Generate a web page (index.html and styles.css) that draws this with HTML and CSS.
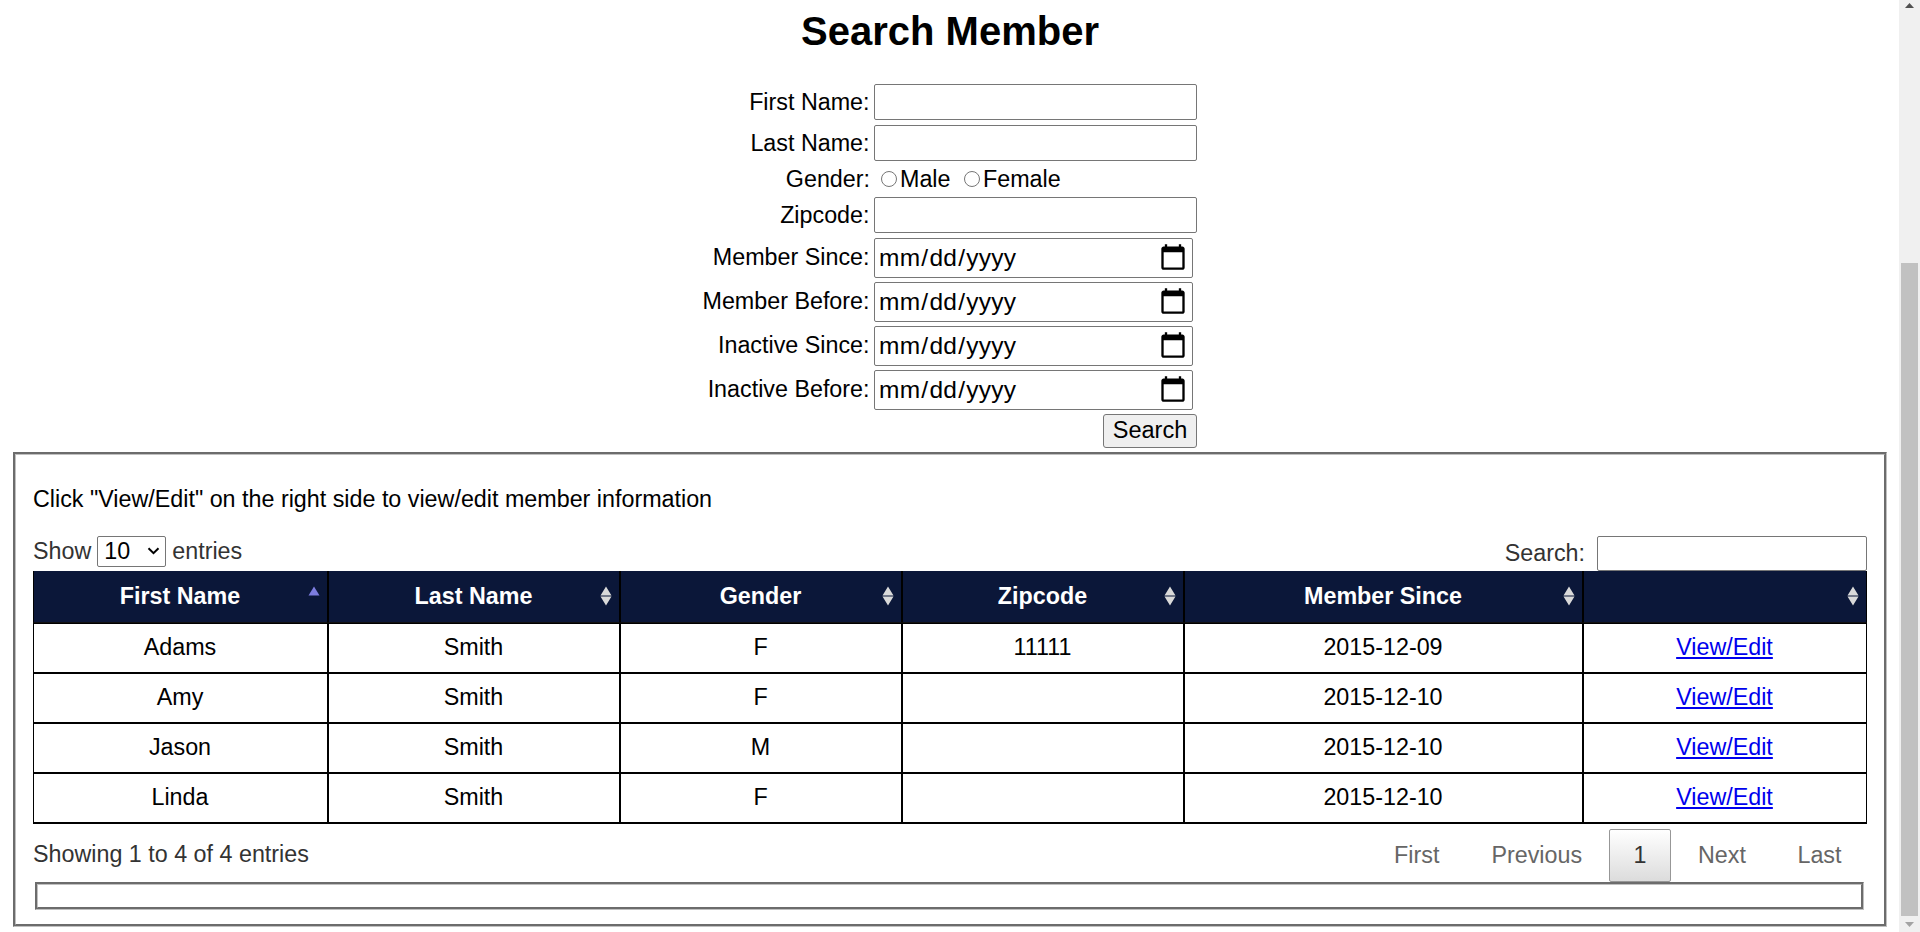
FILE: index.html
```html
<!DOCTYPE html>
<html lang="en">
<head>
<meta charset="utf-8">
<title>Search Member</title>
<link rel="stylesheet" href="styles.css">
</head>
<body>
<div class="layout">
<main class="page">
  <h2 class="title">Search Member</h2>
  <form class="search-form">
    <label class="row-text">First Name:</label><input type="text" class="field">
    <label class="row-text">Last Name:</label><input type="text" class="field">
    <span class="row-gender">Gender:</span>
    <span class="radios row-gender"><input type="radio" name="g"><span class="male">Male</span><input type="radio" name="g"><span>Female</span></span>
    <label class="row-text">Zipcode:</label><input type="text" class="field">
    <label class="row-date">Member Since:</label><input type="date" class="field date">
    <label class="row-date">Member Before:</label><input type="date" class="field date">
    <label class="row-date">Inactive Since:</label><input type="date" class="field date">
    <label class="row-date">Inactive Before:</label><input type="date" class="field date">
    <button type="button" class="submit">Search</button>
  </form>
  <section class="results">
    <p class="hint">Click "View/Edit" on the right side to view/edit member information</p>
    <div class="controls">
      <label class="length">Show <span class="select">10<svg width="13" height="8" viewBox="0 0 13 8"><path d="M1.5 1.2 6.5 6.2 11.5 1.2" fill="none" stroke="#000" stroke-width="2"/></svg></span> entries</label>
      <label class="filter">Search:<input type="text" class="filter-input"></label>
    </div>
    <table class="members">
      <colgroup><col class="c1"><col class="c2"><col class="c3"><col class="c3"><col class="c5"><col class="c6"></colgroup>
      <thead><tr>
        <th><div class="head">First Name<svg class="sort asc" viewBox="0 0 12 20"><path d="M6 .5 11.500 9.500H.5Z"/></svg></div></th>
        <th><div class="head">Last Name<svg class="sort" viewBox="0 0 12 20"><path d="M6 .5 11.500 9.400H.5ZM.5 10.600h11L6 19.500Z"/></svg></div></th>
        <th><div class="head">Gender<svg class="sort" viewBox="0 0 12 20"><path d="M6 .5 11.500 9.400H.5ZM.5 10.600h11L6 19.500Z"/></svg></div></th>
        <th><div class="head">Zipcode<svg class="sort" viewBox="0 0 12 20"><path d="M6 .5 11.500 9.400H.5ZM.5 10.600h11L6 19.500Z"/></svg></div></th>
        <th><div class="head">Member Since<svg class="sort" viewBox="0 0 12 20"><path d="M6 .5 11.500 9.400H.5ZM.5 10.600h11L6 19.500Z"/></svg></div></th>
        <th><div class="head"><svg class="sort" viewBox="0 0 12 20"><path d="M6 .5 11.500 9.400H.5ZM.5 10.600h11L6 19.500Z"/></svg></div></th>
      </tr></thead>
      <tbody>
        <tr><td>Adams</td><td>Smith</td><td>F</td><td>11111</td><td>2015-12-09</td><td><a href="#">View/Edit</a></td></tr>
        <tr><td>Amy</td><td>Smith</td><td>F</td><td></td><td>2015-12-10</td><td><a href="#">View/Edit</a></td></tr>
        <tr><td>Jason</td><td>Smith</td><td>M</td><td></td><td>2015-12-10</td><td><a href="#">View/Edit</a></td></tr>
        <tr><td>Linda</td><td>Smith</td><td>F</td><td></td><td>2015-12-10</td><td><a href="#">View/Edit</a></td></tr>
      </tbody>
    </table>
    <div class="footer">
      <span class="info">Showing 1 to 4 of 4 entries</span>
      <nav class="pager"><span class="first">First</span><span class="prev">Previous</span><span class="current">1</span><span class="next">Next</span><span class="last">Last</span></nav>
    </div>
    <div class="empty-box"></div>
  </section>
</main>
<aside class="scrollbar">
  <svg class="arrow" width="9" height="5" viewBox="0 0 9 5"><path d="M4.5 0 9 5H0Z" fill="#505050"/></svg>
  <div class="thumb"></div>
  <svg class="arrow" width="9" height="5" viewBox="0 0 9 5"><path d="M0 0h9L4.500 5Z" fill="#a3a3a3"/></svg>
</aside>
</div>
</body>
</html>
```
FILE: styles.css
```css
* { box-sizing: border-box; }
html, body { margin: 0; height: 932px; overflow: hidden; background: #fff; }
body { font-family: "Liberation Sans", Arial, sans-serif; font-size: 23.3px; color: #000; }
.layout { display: flex; height: 932px; }
.page { width: 1899px; padding: 8px 12px 0 13px; }
.title { margin: 0; height: 76px; font-size: 40px; line-height: 46px; text-align: center; }
.search-form {
  display: grid;
  grid-template-columns: 191px 323px;
  column-gap: 4px;
  grid-template-rows: 41px 41px 31px 41px 44px 44px 44px 44px 38px;
  margin-left: 666px;
}
.search-form label, .search-form > .row-gender:not(.radios) { text-align: right; white-space: nowrap; }
.search-form label { padding-right: .5px; }
.row-text { line-height: 36px; }
.row-gender { line-height: 26px; }
.row-date { line-height: 38px; }
.radios { display: flex; align-items: center; padding-bottom: 5px; }
.radios input { width: 16px; height: 16px; margin: 0 3px 0 7px; }
.male { margin-right: 6.5px; }
.field { width: 323px; height: 36px; border: 1px solid #767676; border-radius: 2px; font: inherit; background: #fff; }
.date { width: 319px; height: 40px; font-size: 24.5px; letter-spacing: .25px; padding: 1px 4px 1px 3px; color: #000; }
.date::-webkit-calendar-picker-indicator { width: 28px; height: 28px; padding: 0; margin: 0 1px 2px 0; background-size: 28px 28px; }
.submit {
  grid-column: 2; justify-self: end; width: 94px; height: 34px; padding: 0 0 2px;
  border: 1px solid #767676; border-radius: 3px; background: #efefef; font: inherit; font-size: 23.5px; color: #000;
}
.results { height: 475px; padding: 28px 17px 0; border: 3px groove #c0c0c0; }
.hint { margin: 0; height: 52px; line-height: 32px; }
.controls { display: flex; justify-content: space-between; height: 36px; color: #333; }
.length { display: flex; align-items: flex-start; gap: 6px; line-height: 32px; }
.select {
  display: flex; align-items: center; justify-content: space-between; width: 69px; height: 31px; margin-top: 1px;
  padding: 0 5px 1px 6px; border: 1px solid #767676; border-radius: 2px; color: #000;
}
.filter { display: flex; line-height: 36px; }
.filter-input { width: 270px; height: 35px; margin: 1px 0 0 12px; border: 1px solid #767676; border-radius: 2px; }
.members { width: 1834px; table-layout: fixed; border-collapse: separate; border-spacing: 0; text-align: center; border-bottom: 1px solid #000; }
.c1 { width: 295px; }
.c2 { width: 292px; }
.c3 { width: 282px; }
.c5 { width: 399px; }
.c6 { width: 284px; }
.members th, .members td { padding: 0 1px 0 0; border: 1px solid #000; }
.members th { height: 52px; border-top: 0; border-bottom-color: #111; background: #0b1739; color: #fff; font-weight: bold; }
.members td { height: 50px; line-height: 46px; padding-bottom: 2px; }
.members a { color: #00e; text-decoration: underline; }
.head { position: relative; height: 51px; line-height: 50px; }
.sort { position: absolute; right: 6px; top: 15px; width: 12px; height: 20px; fill: #d9d9d9; }
.asc { fill: #7d7ddf; }
.footer { display: flex; justify-content: space-between; height: 58px; padding-top: 5px; }
.info { line-height: 50px; color: #333; }
.pager { display: flex; line-height: 52px; color: #666; }
.current {
  width: 62px; height: 53px; border: 1px solid #979797; border-radius: 2px; line-height: 50px;
  background: linear-gradient(#fff, #dcdcdc); color: #333; text-align: center;
}
.prev { margin: 0 27px 0 52px; }
.next { margin: 0 51.5px 0 27px; }
.last { margin-right: 25.5px; }
.empty-box { height: 28px; margin: 0 3px 0 2px; border: 3px groove #c0c0c0; }
.scrollbar { display: flex; flex-direction: column; align-items: center; width: 21px; padding: 3px 0 5px; background: #f0f0f0; }
.thumb { width: 17px; flex: 1; margin: 255px 0 6px; background: #c1c1c1; }
.arrow { display: block; }
```
